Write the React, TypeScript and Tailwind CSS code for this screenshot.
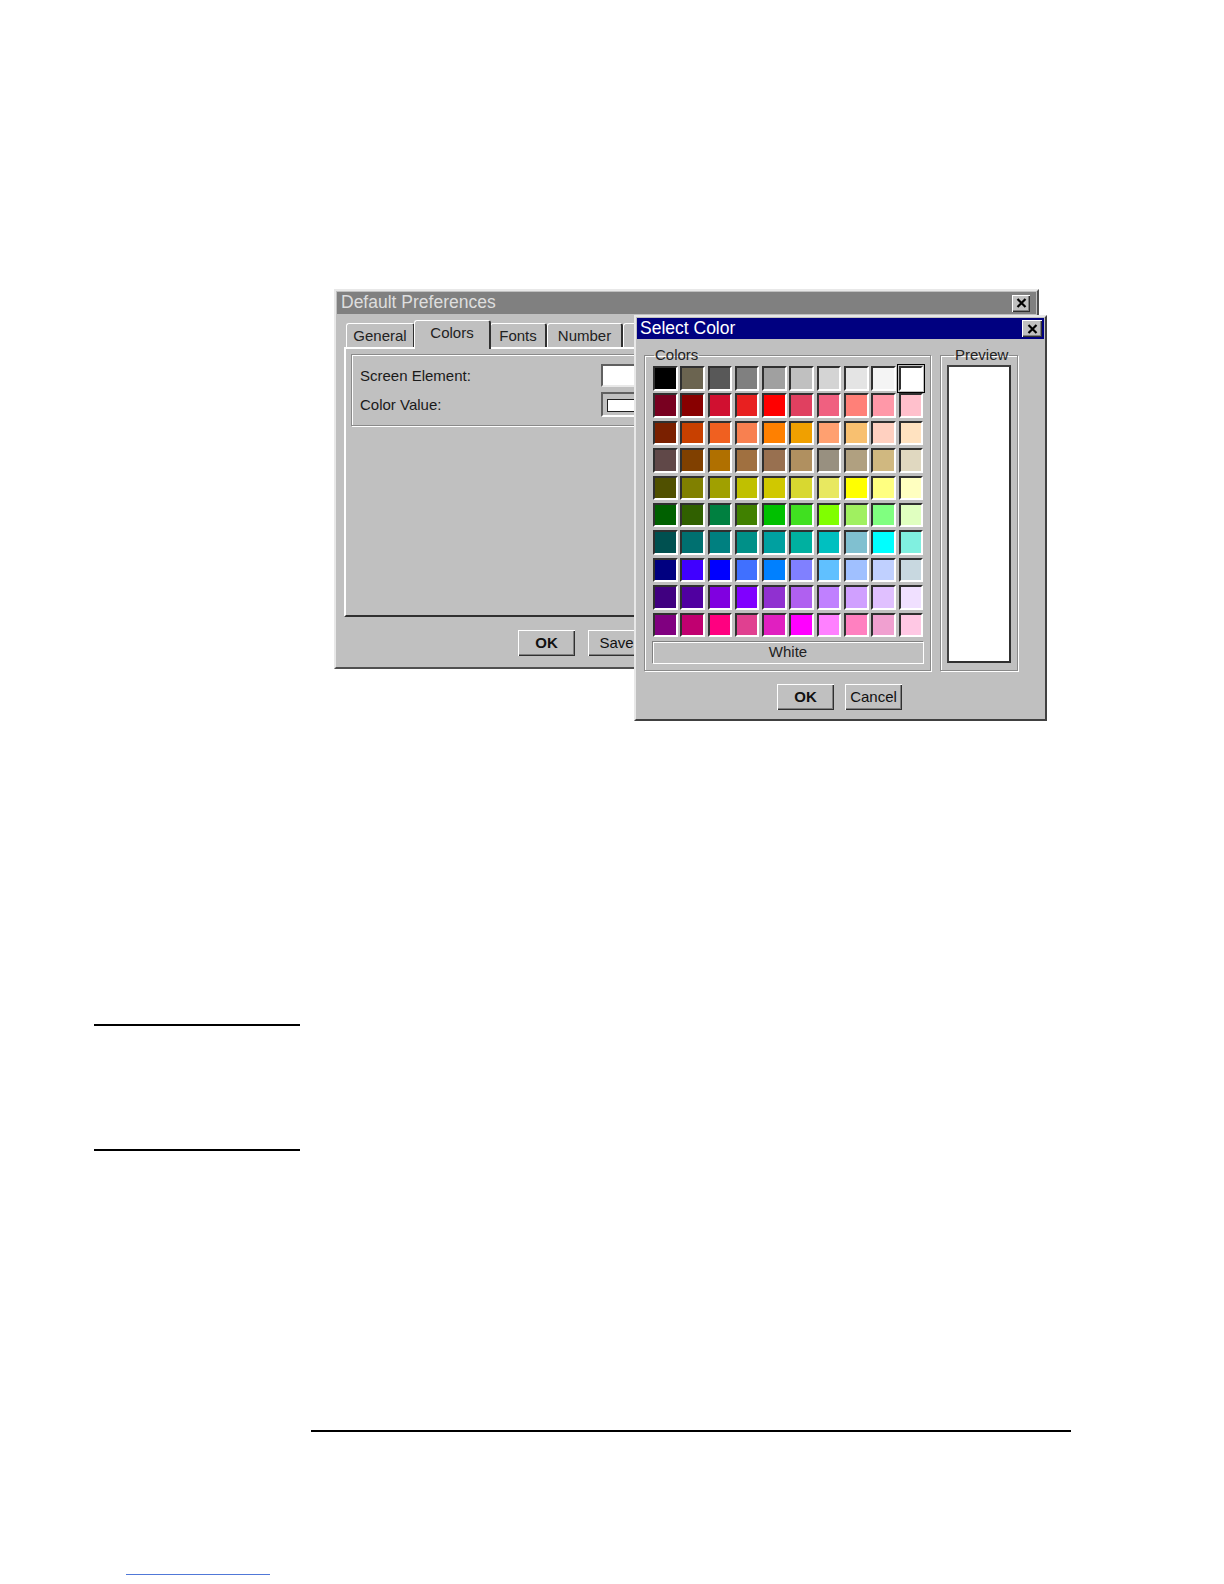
import React from 'react';

const swatches: string[][] = [
  ['#000000', '#6b6450', '#585858', '#808080', '#a0a0a0', '#c0c0c0', '#d4d4d4', '#e4e4e4', '#f4f4f4', '#ffffff'],
  ['#780020', '#880000', '#d01030', '#e82020', '#ff0000', '#e04060', '#f06080', '#ff8078', '#ff98a8', '#ffc0cc'],
  ['#7a2000', '#c84000', '#f06020', '#f88050', '#ff8000', '#f0a000', '#ffa070', '#f8c070', '#ffd0c0', '#ffe2c0'],
  ['#604848', '#804000', '#b07000', '#a07040', '#987050', '#b09060', '#989080', '#b0a080', '#d0b880', '#e0d8c0'],
  ['#505000', '#808000', '#a0a000', '#c0c000', '#d0c800', '#d8d830', '#e8e860', '#ffff00', '#ffff80', '#ffffc0'],
  ['#006000', '#306000', '#008040', '#408000', '#00c000', '#40e020', '#80ff00', '#a0f060', '#80ff80', '#e0ffc0'],
  ['#005050', '#007070', '#008080', '#009088', '#00a0a0', '#00b0a0', '#00c0c0', '#80c0d0', '#00ffff', '#80f0e0'],
  ['#000080', '#4000ff', '#0000ff', '#4070ff', '#0080ff', '#8080ff', '#60c0ff', '#a0c0ff', '#c0d0ff', '#c8d8e0'],
  ['#400080', '#5000a0', '#8000e0', '#8000ff', '#9030d0', '#b060f0', '#c080ff', '#d0a0ff', '#e0c0ff', '#f0e0ff'],
  ['#800080', '#c00070', '#ff0080', '#e04090', '#e020c0', '#ff00ff', '#ff80ff', '#ff80c0', '#f0a0d0', '#ffc8e4'],
];

// raised 3d look used by buttons
const raised =
  'shadow-[inset_1px_1px_0_#ffffff,inset_-1px_-1px_0_#303030,inset_-2px_-2px_0_#808080]';

function CloseBox({ w }: { w: string }) {
  return (
    <div className={`${w} h-[17px] bg-[#c0c0c0] flex items-center justify-center ${raised}`}>
      <svg width="11" height="10" viewBox="0 0 11 10">
        <path d="M1.5 1 L9.5 9 M9.5 1 L1.5 9" stroke="#000" strokeWidth="2.2" />
      </svg>
    </div>
  );
}

function Button({ label, bold }: { label: string; bold?: boolean }) {
  return (
    <div
      className={`w-[57px] h-[26px] bg-[#c0c0c0] flex items-center justify-center text-[15px] text-[#111] ${raised} ${
        bold ? 'font-bold' : ''
      }`}
    >
      {label}
    </div>
  );
}

function Tab({ label, width, selected }: { label: string; width: string; selected?: boolean }) {
  return (
    <div
      className={`${width} ${
        selected ? 'h-[29px] z-10 -mx-[1px] pb-[3px]' : 'h-[26px]'
      } bg-[#c0c0c0] rounded-t-[3px] border-t border-l border-t-white border-l-white border-r-2 border-r-[#303030] flex items-center justify-center text-[15px] text-[#222]`}
    >
      {label}
    </div>
  );
}

function DefaultPreferences() {
  return (
    <div className="absolute left-[334px] top-0 w-[705px] h-[380px] bg-[#c0c0c0] border-2 border-t-[#e8e8e8] border-l-[#e8e8e8] border-r-[#505050] border-b-[#505050] flex flex-col">
      <div className="mx-[1px] mt-[1px] h-[22px] bg-[#808080] flex items-center justify-between pl-[4px] pr-[6px]">
        <span className="text-[17.5px] text-[#dedede] leading-none">Default Preferences</span>
        <CloseBox w="w-[18px]" />
      </div>

      <div className="mt-[6px] ml-[10px] h-[29px] flex items-end -mb-[2px]">
        <Tab label="General" width="w-[69px]" />
        <Tab label="Colors" width="w-[77px]" selected />
        <Tab label="Fonts" width="w-[57px]" />
        <Tab label="Number" width="w-[76px]" />
        <Tab label="" width="w-[62px]" />
      </div>

      <div className="ml-[8px] w-[685px] h-[270px] border-2 border-t-white border-l-white border-r-[#303030] border-b-[#303030] pt-[5px] px-[5px]">
        <div className="h-[72px] border border-[#8a8a8a] shadow-[inset_1px_1px_0_#ffffff,1px_1px_0_#ffffff] pt-[9px] pl-[8px] flex flex-col gap-[5px]">
          <div className="h-[23px] flex items-center">
            <span className="w-[241px] text-[15px] text-[#1a1a1a] pt-[2px]">Screen Element:</span>
            <div className="w-[200px] h-[23px] bg-white border-2 border-t-[#606060] border-l-[#606060] border-r-[#e8e8e8] border-b-[#e8e8e8]" />
          </div>
          <div className="h-[25px] flex items-center">
            <span className="w-[241px] text-[15px] text-[#1a1a1a] pt-[2px]">Color Value:</span>
            <div className="w-[200px] h-[25px] border-2 border-t-[#606060] border-l-[#606060] border-r-white border-b-white pl-[4px] pt-[5px]">
              <div className="w-[40px] h-[13px] bg-white border border-[#202020]" />
            </div>
          </div>
        </div>
      </div>

      <div className="mt-[13px] ml-[182px] flex gap-[13px]">
        <Button label="OK" bold />
        <Button label="Save" />
        <Button label="Cancel" />
        <Button label="Help" />
      </div>
    </div>
  );
}

function SelectColor() {
  return (
    <div className="absolute left-[634px] top-[26px] w-[413px] h-[406px] bg-[#c0c0c0] border-2 border-t-[#e8e8e8] border-l-[#e8e8e8] border-r-[#404040] border-b-[#404040] flex flex-col">
      <div className="mx-[1px] mt-[1px] h-[21px] bg-[#000080] flex items-center justify-between pl-[3px] pr-[2px]">
        <span className="text-[17.5px] text-white leading-none">Select Color</span>
        <CloseBox w="w-[20px]" />
      </div>

      <div className="mt-[8px] ml-[8px] flex gap-[9px]">
        <fieldset className="w-[287px] h-[324px] border border-[#8a8a8a] shadow-[inset_1px_1px_0_#ffffff,1px_1px_0_#ffffff] pl-[8px]">
          <legend className="ml-[1px] px-[1px] text-[15px] leading-[16px] text-[#222]">Colors</legend>
          <div className="mt-[3px] grid grid-cols-[repeat(10,24.5px)] auto-rows-[24.5px] gap-x-[2.8px] gap-y-[2.9px]">
            {swatches.map((row, r) =>
              row.map((c, i) => {
                const sel = r === 0 && i === 9;
                return (
                  <div
                    key={`${r}-${i}`}
                    className={`w-[24.5px] h-[24.5px] border-2 border-t-[#303030] border-l-[#303030] border-r-white border-b-white ${
                      sel ? 'outline outline-1 outline-black outline-offset-[1px]' : ''
                    }`}
                    style={{ backgroundColor: c }}
                  />
                );
              })
            )}
          </div>
          <div className="mt-[4px] -ml-[1px] w-[272px] h-[23px] border border-t-[#808080] border-l-[#808080] border-r-white border-b-white shadow-[inset_1px_1px_0_#ffffff] flex items-center justify-center text-[15px] text-[#222]">
            White
          </div>
        </fieldset>

        <fieldset className="w-[78px] h-[324px] border border-[#8a8a8a] shadow-[inset_1px_1px_0_#ffffff,1px_1px_0_#ffffff] pl-[6px]">
          <legend className="ml-[7px] px-[1px] text-[15px] leading-[16px] text-[#222]">Preview</legend>
          <div className="mt-[2px] w-[64px] h-[298px] bg-white border-2 border-t-[#404040] border-l-[#404040] border-r-[#303030] border-b-[#303030]" />
        </fieldset>
      </div>

      <div className="mt-[13px] flex justify-center gap-[11px] pr-[2px]">
        <Button label="OK" bold />
        <Button label="Cancel" />
      </div>
    </div>
  );
}

export default function App() {
  return (
    <div className="w-[1224px] h-[1584px] bg-white overflow-hidden pt-[289px] font-['Liberation_Sans',Arial,sans-serif]">
      <div className="relative h-[434px]">
        <DefaultPreferences />
        <SelectColor />
      </div>

      <div className="mt-[301px] ml-[94px] w-[206px] h-[2px] bg-black" />
      <div className="mt-[123px] ml-[94px] w-[206px] h-[2px] bg-black" />
      <div className="mt-[279px] ml-[311px] w-[760px] h-[2px] bg-black" />
      <div className="mt-[142px] ml-[126px] w-[144px] h-px bg-[#5078d8]" />
    </div>
  );
}
